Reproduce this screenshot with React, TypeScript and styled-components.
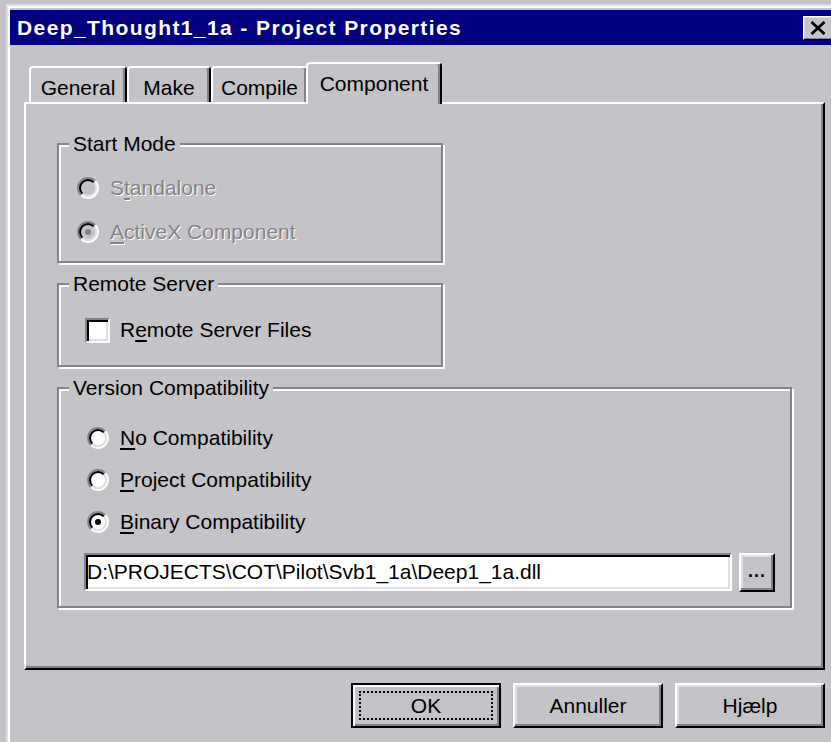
import React from 'react';
import styled, { createGlobalStyle, css } from 'styled-components';

const face = '#c4c3c7';
const shadow = '#838286';
const light = '#dfdfe1';

const GlobalStyle = createGlobalStyle`
  html, body {
    margin: 0;
    padding: 0;
    background: ${face};
    overflow: hidden;
  }
  body {
    font-family: "Liberation Sans", Arial, sans-serif;
    font-size: 21px;
    color: #000;
  }
`;

const raised = (edge = 2) => css`
  border-style: solid;
  border-width: ${edge}px;
  border-color: #fff #000 #000 #fff;
  box-shadow: inset -${edge}px -${edge}px 0 ${shadow}, inset ${edge}px ${edge}px 0 ${light};
`;

const sunken = css`
  border-style: solid;
  border-width: 2px;
  border-color: ${shadow} #fff #fff ${shadow};
  box-shadow: inset 2px 2px 0 #000, inset -2px -2px 0 ${light};
`;

const Window = styled.div`
  box-sizing: border-box;
  width: 837px;
  height: 760px;
  margin: 4px 0 0 6px;
  padding: 4px 4px 0 2px;
  border-top: 2px solid ${light};
  border-left: 2px solid ${light};
  box-shadow: inset 2px 2px 0 #fff;
  background: ${face};
`;

const TitleBar = styled.div`
  height: 35px;
  display: flex;
  align-items: center;
  justify-content: space-between;
  padding: 0 6px 0 7px;
  background: #020080;
`;

const Title = styled.span`
  color: #fff;
  font-weight: 700;
  font-size: 21px;
  letter-spacing: 1.4px;
  white-space: nowrap;
`;

const CloseButton = styled.div`
  box-sizing: border-box;
  width: 30px;
  height: 24px;
  display: flex;
  align-items: center;
  justify-content: center;
  background: ${face};
  ${raised(1)}
`;

const Body = styled.div`
  padding: 17px 14px 0 14px;
`;

const TabStrip = styled.div`
  display: flex;
  align-items: flex-end;
  padding-left: 5px;
`;

const Tab = styled.div<{ $w: number; $active?: boolean }>`
  box-sizing: border-box;
  width: ${p => p.$w}px;
  height: ${p => (p.$active ? 42 : 36)}px;
  margin: ${p => (p.$active ? '0 -2px -2px' : '0')};
  padding-top: 8px;
  line-height: 24px;
  text-align: center;
  white-space: nowrap;
  background: ${face};
  border-top: 2px solid #fff;
  border-left: 2px solid #fff;
  border-right: 2px solid #000;
  border-radius: 4px 4px 0 0;
  box-shadow: inset -2px 0 0 ${shadow};
  position: relative;
  z-index: ${p => (p.$active ? 2 : 0)};
`;

const Panel = styled.div`
  box-sizing: border-box;
  height: 568px;
  padding: 39px 0 0 31px;
  border-style: solid;
  border-width: 2px;
  border-color: #fff #000 #000 #fff;
  box-shadow: inset -2px -2px 0 ${shadow};
  position: relative;
  z-index: 1;
`;

const Group = styled.div<{ $w: number; $h: number }>`
  box-sizing: border-box;
  width: ${p => p.$w}px;
  height: ${p => p.$h}px;
  margin-bottom: 20px;
  border: 2px solid ${shadow};
  box-shadow: inset 2px 2px 0 #fff, 2px 2px 0 #fff;
`;

const Caption = styled.div`
  width: fit-content;
  margin: -13px 0 0 10px;
  padding: 0 4px;
  line-height: 24px;
  background: ${face};
  white-space: nowrap;
`;

const OptionList = styled.div<{ $top: number; $left: number; $row: number }>`
  display: flex;
  flex-direction: column;
  padding: ${p => p.$top}px 0 0 ${p => p.$left}px;

  & > * {
    height: ${p => p.$row}px;
  }
`;

const Option = styled.div`
  display: flex;
  align-items: center;
  gap: 11px;
`;

const OptionText = styled.span<{ $disabled?: boolean }>`
  line-height: 24px;
  white-space: nowrap;
  ${p =>
    p.$disabled &&
    css`
      color: ${shadow};
      text-shadow: 1px 1px 0 #fff;
    `}

  u {
    text-decoration-thickness: 2px;
    text-underline-offset: 3px;
  }
`;

const CheckBox = styled.span`
  box-sizing: border-box;
  width: 25px;
  height: 25px;
  margin-right: -1px;
  background: #fff;
  ${sunken}
`;

const PathRow = styled.div`
  display: flex;
  align-items: flex-start;
  gap: 7px;
  margin-top: 10px;
  padding-left: 25px;
`;

const TextBox = styled.div`
  box-sizing: border-box;
  width: 648px;
  height: 38px;
  padding-left: 1px;
  display: flex;
  align-items: center;
  background: #fff;
  white-space: nowrap;
  ${sunken}
`;

const BrowseButton = styled.div`
  box-sizing: border-box;
  width: 36px;
  height: 39px;
  display: flex;
  align-items: center;
  justify-content: center;
  padding-bottom: 2px;
  font-weight: 700;
  font-size: 18px;
  letter-spacing: 1px;
  ${raised(2)}
`;

const ButtonRow = styled.div`
  display: flex;
  justify-content: flex-end;
  gap: 12px;
  margin-top: 13px;
`;

const DialogButton = styled.div<{ $default?: boolean }>`
  box-sizing: border-box;
  width: 150px;
  height: 45px;
  display: flex;
  align-items: center;
  justify-content: center;
  ${p =>
    p.$default
      ? css`
          border: 2px solid #000;
          box-shadow: inset 2px 2px 0 #fff, inset -2px -2px 0 ${shadow};
          padding: 6px;
        `
      : raised(2)}
`;

const FocusRing = styled.span`
  box-sizing: border-box;
  flex: 1;
  align-self: stretch;
  display: flex;
  align-items: center;
  justify-content: center;
  border: 2px dotted #000;
`;

const Radio: React.FC<{ checked?: boolean; disabled?: boolean }> = ({ checked, disabled }) => (
  <svg width="22" height="22" viewBox="0 0 22 22" style={{ flex: 'none' }}>
    <circle cx="11" cy="11" r="7.5" fill={disabled ? face : '#fff'} />
    <path d="M3.93 18.07 A10 10 0 0 0 18.07 3.93" fill="none" stroke="#fff" strokeWidth="2" />
    <path d="M3.93 18.07 A10 10 0 0 1 18.07 3.93" fill="none" stroke={shadow} strokeWidth="2" />
    <path d="M5.34 16.66 A8 8 0 0 0 16.66 5.34" fill="none" stroke={light} strokeWidth="2" />
    <path d="M5.34 16.66 A8 8 0 0 1 16.66 5.34" fill="none" stroke="#000" strokeWidth="2" />
    {checked && <circle cx="11" cy="11" r="3" fill={disabled ? shadow : '#000'} />}
  </svg>
);

const CloseGlyph = () => (
  <svg width="16" height="14" viewBox="0 0 16 14">
    <path d="M1.5 1 L14.5 13 M14.5 1 L1.5 13" stroke="#000" strokeWidth="2.8" />
  </svg>
);

export default function App() {
  return (
    <>
      <GlobalStyle />
      <Window>
        <TitleBar>
          <Title>Deep_Thought1_1a - Project Properties</Title>
          <CloseButton>
            <CloseGlyph />
          </CloseButton>
        </TitleBar>

        <Body>
          <TabStrip>
            <Tab $w={98}>General</Tab>
            <Tab $w={84}>Make</Tab>
            <Tab $w={97}>Compile</Tab>
            <Tab $w={136} $active>Component</Tab>
          </TabStrip>

          <Panel>
            <Group $w={386} $h={120}>
              <Caption>Start Mode</Caption>
              <OptionList $top={10} $left={18} $row={44}>
                <Option>
                  <Radio disabled />
                  <OptionText $disabled>S<u>t</u>andalone</OptionText>
                </Option>
                <Option>
                  <Radio checked disabled />
                  <OptionText $disabled><u>A</u>ctiveX Component</OptionText>
                </Option>
              </OptionList>
            </Group>

            <Group $w={386} $h={84}>
              <Caption>Remote Server</Caption>
              <OptionList $top={12} $left={26} $row={44}>
                <Option>
                  <CheckBox />
                  <OptionText>R<u>e</u>mote Server Files</OptionText>
                </Option>
              </OptionList>
            </Group>

            <Group $w={735} $h={221}>
              <Caption>Version Compatibility</Caption>
              <OptionList $top={17} $left={28} $row={42}>
                <Option>
                  <Radio />
                  <OptionText><u>N</u>o Compatibility</OptionText>
                </Option>
                <Option>
                  <Radio />
                  <OptionText><u>P</u>roject Compatibility</OptionText>
                </Option>
                <Option>
                  <Radio checked />
                  <OptionText><u>B</u>inary Compatibility</OptionText>
                </Option>
              </OptionList>
              <PathRow>
                <TextBox>D:\PROJECTS\COT\Pilot\Svb1_1a\Deep1_1a.dll</TextBox>
                <BrowseButton>...</BrowseButton>
              </PathRow>
            </Group>
          </Panel>

          <ButtonRow>
            <DialogButton $default>
              <FocusRing>OK</FocusRing>
            </DialogButton>
            <DialogButton>Annuller</DialogButton>
            <DialogButton>Hjælp</DialogButton>
          </ButtonRow>
        </Body>
      </Window>
    </>
  );
}
